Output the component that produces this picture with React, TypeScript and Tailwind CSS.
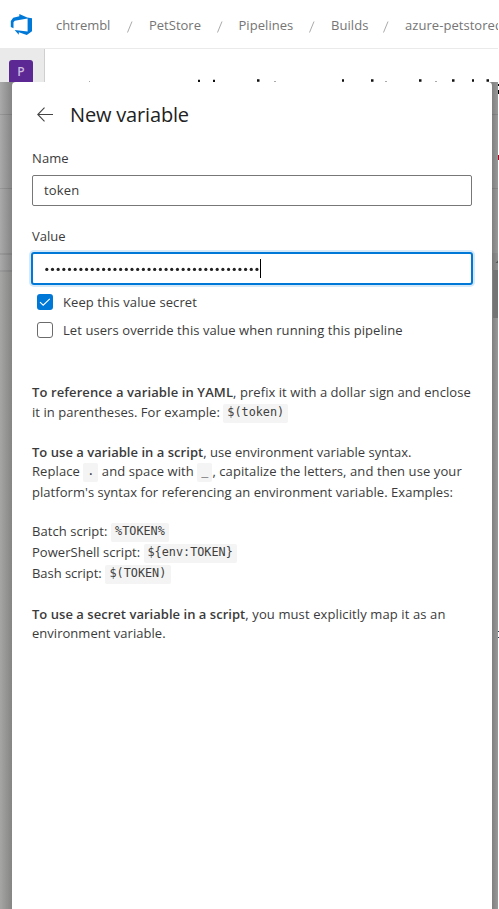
import type { ReactNode } from "react";

const crumbs = [
  { label: "chtrembl", box: "w-[71px]", text: "tracking-[-0.05px]" },
  { label: "PetStore", box: "w-[67.5px]", text: "tracking-[0px]" },
  { label: "Pipelines", box: "w-[70.5px]", text: "tracking-[0.05px]" },
  { label: "Builds", box: "w-[52px]", text: "tracking-[0.05px]" },
];

function Code({ children, className = "" }: { children: ReactNode; className?: string }) {
  return (
    <code
      className={`inline-flex h-[19px] shrink-0 items-center justify-center rounded-[2px] bg-[#f4f4f4] font-['DejaVu_Sans_Mono',monospace] text-[11.8px] tracking-normal text-[#404040] ${className}`}
    >
      {children}
    </code>
  );
}

function Line({ children, className = "" }: { children: ReactNode; className?: string }) {
  return <div className={`flex h-5 items-center whitespace-pre ${className}`}>{children}</div>;
}

function Logo() {
  return (
    <svg className="mt-[14px] ml-[10px] h-[22px] w-[23px] shrink-0" viewBox="0 0 23 22">
      <path
        fill="#0078d7"
        fillRule="evenodd"
        d="M22 4.2V17.2L16.8 21L8.8 18.2V20.8L4.6 15.9L17.6 17.6V4.6L4.8 6.7L3.5 8.2V14.3L0.8 13V7L3.2 3.8L9.3 2.3V0L17.2 3.6Z"
      />
    </svg>
  );
}

function Dimmed({ side }: { side: "left" | "right" }) {
  const left = side === "left";
  return (
    <div
      className={`flex flex-col ${
        left
          ? "w-3 bg-linear-to-r from-[#aaa] to-[#858585]"
          : "w-1.5 bg-linear-to-r from-[#808080] to-[#999]"
      }`}
    >
      <div className="h-[33px] border-b border-black/10" />
      <div className="h-[74px] border-b border-black/10" />
      {left ? (
        <>
          <div className="h-[66px] border-b-2 border-black/8" />
          <div className="h-[17px] border-b-2 border-black/8" />
          <div className="flex-1 bg-[#8b8a7c]/10" />
        </>
      ) : (
        <>
          <div className="h-[64px]" />
          <div className="flex h-[17px] items-center bg-black/5">
            <svg className="h-[3px] w-full" viewBox="0 0 6 3">
              <path d="M3.5 3L6 0.5V3Z" fill="#555" />
            </svg>
          </div>
          <div className="ml-px h-12 bg-[#747474]" />
          <div className="flex-1" />
        </>
      )}
    </div>
  );
}

export default function App() {
  return (
    <div className="flex h-[909px] w-[499px] flex-col overflow-hidden bg-white font-['Open_Sans','Noto_Sans',sans-serif] text-[13px] text-[#3b3b3b]">
      <header className="flex h-[49px] w-[498px] shrink-0 overflow-hidden border-b border-[#eaeaea]">
        <Logo />
        <nav className="ml-[23px] flex h-[50px] shrink-0 items-center pt-px whitespace-nowrap text-[#757575]">
          {crumbs.map((c) => (
            <div key={c.label} className="flex">
              <span className={`${c.box} ${c.text}`}>{c.label}</span>
              <svg className="mt-[5px] mr-4 h-3 w-1.5" viewBox="0 0 6 12">
                <path d="M0.5 11.5L5 0.5" stroke="#aaa" />
              </svg>
            </div>
          ))}
          <span className="tracking-[0.05px]">azure-petstoredocker</span>
        </nav>
      </header>

      <div className="flex h-[33px] w-full shrink-0">
        <div className="w-[45px] overflow-hidden border-r border-[#cfcfcf] bg-[#eaeaea] pt-[11px] pl-[9px]">
          <div className="flex h-6 w-6 items-center justify-center rounded-[3px] bg-[#5c2893] text-[12px] font-semibold text-[#cdbbe0]">
            P
          </div>
        </div>
        <svg className="h-[33px] w-[454px]" viewBox="0 0 454 33">
          <path
            d="M153 32h2M168 32h2M212 31.5h2.5M297 31.5h2M326 31.5h2.5M374 31.5h2.5M407 31.5h2.5M427 31.5h2M441.5 31.5h2.5"
            stroke="#111"
            strokeWidth="2.4"
          />
          <path d="M44 32.5h1M229 32.5h2M340 32.5h2M390 32.5h2" stroke="#aaa" />
        </svg>
      </div>

      <div className="flex flex-1">
        <div className="flex w-[498px] bg-[#8b8b8b]">
          <Dimmed side="left" />
          <main className="flex w-[480px] flex-col rounded-t-[4px] bg-white px-5">
            <div className="flex h-[65px] items-center">
              <svg className="ml-[5px] h-[15px] w-4" viewBox="0 0 16 15" fill="none" stroke="#444" strokeWidth="1.1">
                <path d="M7.5 0.7L0.8 7.5L7.5 14.3M0.8 7.5H16" />
              </svg>
              <h1 className="ml-[17px] text-[20px] font-medium tracking-[-0.17px] text-[#222]">New variable</h1>
            </div>

            <label className="flex h-[22px] items-center pt-px tracking-[0.1px]">Name</label>
            <div className="mt-[6px] flex h-[31px] items-center rounded-[2px] border border-[#777] pt-px pl-[11px] tracking-[0.15px]">
              token
            </div>

            <label className="mt-[19px] flex h-[22px] items-center pt-px">Value</label>
            <div className="-mx-px mt-[5px] flex h-[33px] shrink-0 items-center rounded-[3px] border-2 border-[#0078d7] pl-3 shadow-[0_0_0_2px_#d5e9f9]">
              <svg className="h-1 w-[215px]" viewBox="0 0 215 4">
                {Array.from({ length: 38 }, (_, i) => (
                  <circle key={i} cx={1.8 + i * 5.68} cy="2.4" r="1.6" fill="#222" />
                ))}
              </svg>
              <div className="h-[19px] w-px bg-black" />
            </div>

            <label className="mt-[7px] flex h-5 items-center">
              <svg className="ml-[5px] h-4 w-4 rounded-[3px] bg-[#0078d7]" viewBox="0 0 16 16">
                <path d="M3 8.2L6.2 11.2L12.8 4.8" fill="none" stroke="white" strokeWidth="1.1" />
              </svg>
              <span className="ml-[10px] pt-0.5 tracking-[0.09px]">Keep this value secret</span>
            </label>
            <label className="mt-2 flex h-5 items-center">
              <span className="ml-[5px] h-4 w-4 rounded-[3px] border border-[#6b6b6b]" />
              <span className="ml-[10px] pt-0.5 tracking-[0.08px]">
                Let users override this value when running this pipeline
              </span>
            </label>

            <Line className="mt-[43px] tracking-[0.06px]">
              <b className="font-semibold tracking-[0.1px]">To reference a variable in YAML</b>, prefix it with a dollar
              sign and enclose
            </Line>
            <Line className="tracking-[0.04px]">
              it in parentheses. For example: <Code className="w-[65px]">$(token)</Code>
            </Line>

            <Line className="mt-5 tracking-[0.03px]">
              <b className="font-semibold">To use a variable in a script</b>, use environment variable syntax.
            </Line>
            <Line className="-mt-px tracking-[0.09px]">
              Replace <Code className="w-[15px]">.</Code> and space with <Code className="w-[15px]">_</Code>, capitalize
              the letters, and then use your
            </Line>
            <Line className="mt-px tracking-[0.045px]">
              platform's syntax for referencing an environment variable. Examples:
            </Line>

            <Line className="mt-[19px] tracking-[0.05px]">
              Batch script: <Code className="w-[58px]">%TOKEN%</Code>
            </Line>
            <Line className="mt-px tracking-[0.03px]">
              PowerShell script: <Code className="w-[93px]">{"${env:TOKEN}"}</Code>
            </Line>
            <Line className="mt-px tracking-[-0.05px]">
              Bash script: <Code className="w-[66px]">$(TOKEN)</Code>
            </Line>

            <Line className="mt-[21px] tracking-[0.11px]">
              <b className="font-semibold tracking-[0.03px]">To use a secret variable in a script</b>, you must
              explicitly map it as an
            </Line>
            <Line className="-mt-px tracking-[0.03px]">environment variable.</Line>
          </main>
          <Dimmed side="right" />
        </div>
        <div className="flex w-px flex-col">
          <div className="mt-[2px] h-[2px] bg-black" />
          <div className="mt-1 h-1 bg-black" />
          <div className="mt-[61px] h-[5px] bg-[#b00020]" />
          <div className="mt-[471px] h-px bg-[#345]" />
          <div className="mt-[5px] h-px bg-[#345]" />
        </div>
      </div>
    </div>
  );
}
